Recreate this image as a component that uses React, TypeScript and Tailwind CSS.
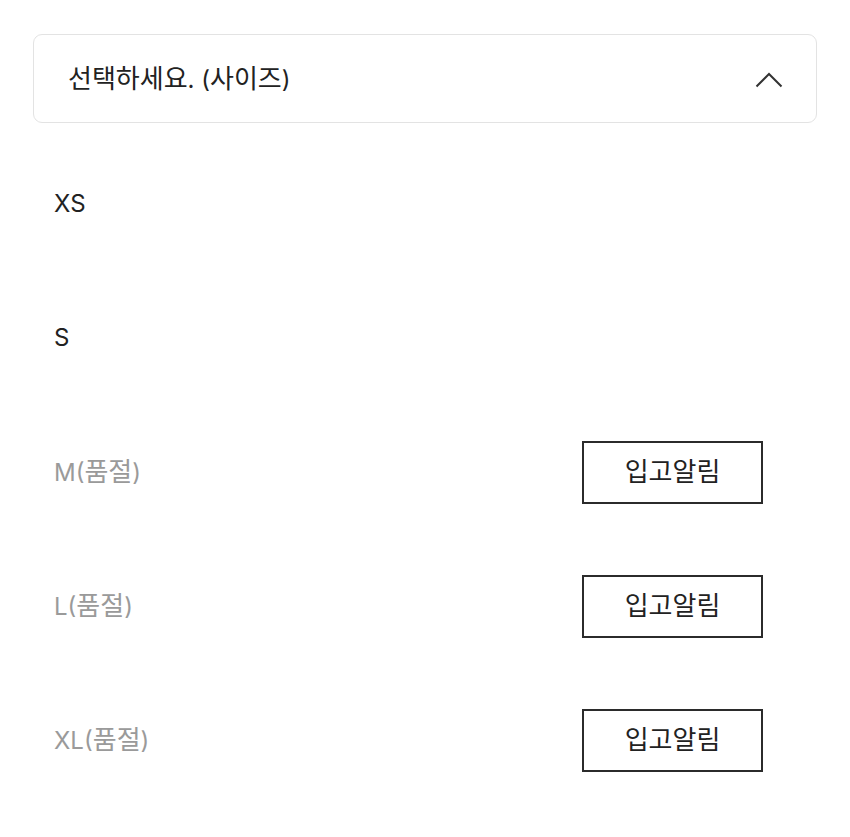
import React from "react";

type SizeOption = { size: string; soldOut: boolean };

const sizes: SizeOption[] = [
  { size: "XS", soldOut: false },
  { size: "S", soldOut: false },
  { size: "M", soldOut: true },
  { size: "L", soldOut: true },
  { size: "XL", soldOut: true },
];

function ChevronUp() {
  return (
    <svg width="28" height="18" viewBox="0 0 28 18" fill="none">
      <path d="M1.5 16.5 L14 4 L26.5 16.5" stroke="#333" strokeWidth="2" />
    </svg>
  );
}

// Hangul is set a touch larger than the Latin letters around it
function Ko({ children }: { children: React.ReactNode }) {
  return <span className="text-[26px]">{children}</span>;
}

export default function App() {
  return (
    <div
      className="w-[850px] h-[837px] bg-white pt-[34px] px-[33px]"
      style={{ fontFamily: 'Inter, "Noto Sans CJK KR", sans-serif' }}
    >
      <div className="h-[89px] border border-[#e3e3e3] rounded-[9px] flex items-center justify-between pl-[34px] pr-[33px]">
        <span className="text-[24px] text-[#222] leading-none">
          <Ko>선택하세요</Ko>. (<Ko>사이즈</Ko>)
        </span>
        <ChevronUp />
      </div>
      <ul className="mt-[14px] pl-[21px] pr-[54px]">
        {sizes.map((s) => (
          <li key={s.size} className="h-[134px] flex items-center justify-between">
            <span
              className={`text-[24px] leading-none ${s.soldOut ? "text-[#9a9a9a]" : "text-[#222]"}`}
            >
              {s.size}
              {s.soldOut && (
                <>
                  (<Ko>품절</Ko>)
                </>
              )}
            </span>
            {s.soldOut && (
              <button className="w-[181px] h-[63px] border-2 border-[#2b2b2b] bg-white text-[26px] text-[#222] flex items-center justify-center leading-none">
                입고알림
              </button>
            )}
          </li>
        ))}
      </ul>
    </div>
  );
}
